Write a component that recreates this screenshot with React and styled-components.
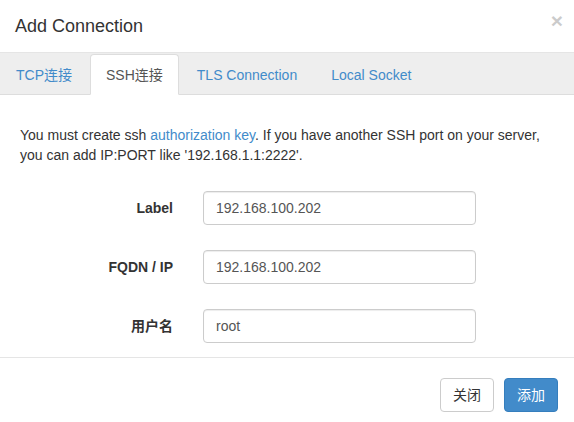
import React from 'react';
import styled, { createGlobalStyle } from 'styled-components';

const GlobalStyle = createGlobalStyle`
    html, body {
        margin: 0;
        padding: 0;
        background: #ffffff;
        overflow: hidden;
    }
    body {
        font-family: "Liberation Sans", Arial, "Noto Sans CJK SC", sans-serif;
        font-size: 14px;
        line-height: 20px;
        color: #333333;
    }
    * {
        box-sizing: border-box;
    }
`;

const tabs = ['TCP连接', 'SSH连接', 'TLS Connection', 'Local Socket'];

const fields = [
    { label: 'Label', value: '192.168.100.202' },
    { label: 'FQDN / IP', value: '192.168.100.202' },
    { label: '用户名', value: 'root' },
];

function App() {
    return (
        <>
            <GlobalStyle />
            <Modal>
                <Header>
                    <Title>Add Connection</Title>
                    <Close type="button">×</Close>
                </Header>
                <TabBar>
                    {tabs.map((tab, i) => (
                        <Tab key={tab} active={i === 1}>{tab}</Tab>
                    ))}
                </TabBar>
                <Body>
                    <Intro>
                        You must create ssh <Link href="#">authorization key</Link>. If you have another SSH port on your server,
                        you can add IP:PORT like '192.168.1.1:2222'.
                    </Intro>
                    <Form>
                        {fields.map((f) => (
                            <React.Fragment key={f.label}>
                                <FieldLabel>{f.label}</FieldLabel>
                                <Input defaultValue={f.value} />
                            </React.Fragment>
                        ))}
                    </Form>
                </Body>
                <Footer>
                    <Button>关闭</Button>
                    <Button primary>添加</Button>
                </Footer>
            </Modal>
        </>
    );
}

export default App;

const Modal = styled.div`
    width: 578px;
    background: #ffffff;
    display: flex;
    flex-direction: column;
`;

const Header = styled.div`
    display: flex;
    align-items: flex-start;
    justify-content: space-between;
    padding: 13px 15px 13px;
    border-bottom: 1px solid #e5e5e5;
`;

const Title = styled.h4`
    margin: 0;
    font-size: 18px;
    line-height: 26px;
    font-weight: 500;
    color: #333333;
`;

const Close = styled.button`
    margin-top: -3px;
    padding: 0;
    border: 0;
    background: transparent;
    font-family: "Liberation Sans", Arial, sans-serif;
    font-size: 21px;
    font-weight: bold;
    line-height: 1;
    color: #000000;
    opacity: 0.2;
    cursor: pointer;
`;

const TabBar = styled.ul`
    display: flex;
    margin: 0;
    padding: 1px 0 0;
    list-style: none;
    background: #eeeeee;
    border-bottom: 1px solid #dddddd;
`;

const Tab = styled.li`
    margin: 0 2px -1px 0;
    padding: 10px 15px 9px;
    line-height: 20px;
    border: 1px solid ${(p) => (p.active ? '#dddddd' : 'transparent')};
    border-bottom-color: ${(p) => (p.active ? '#ffffff' : 'transparent')};
    border-radius: 4px 4px 0 0;
    background: ${(p) => (p.active ? '#ffffff' : 'transparent')};
    color: ${(p) => (p.active ? '#555555' : '#428bca')};
    cursor: pointer;
`;

const Body = styled.div`
    padding: 30px 20px 0;
`;

const Intro = styled.p`
    margin: 0 0 26px;
`;

const Link = styled.a`
    color: #428bca;
    text-decoration: none;
`;

const Form = styled.div`
    display: grid;
    grid-template-columns: 153px 273px;
    column-gap: 30px;
    row-gap: 25px;
    align-items: center;
    margin-bottom: 14px;
`;

const FieldLabel = styled.label`
    text-align: right;
    font-weight: bold;
    color: #333333;
`;

const Input = styled.input`
    height: 34px;
    width: 100%;
    padding: 6px 12px;
    font-family: "Liberation Sans", Arial, sans-serif;
    font-size: 14px;
    line-height: 20px;
    color: #555555;
    background: #ffffff;
    border: 1px solid #cccccc;
    border-radius: 4px;
    box-shadow: inset 0 1px 1px rgba(0, 0, 0, 0.075);
    outline: none;
`;

const Footer = styled.div`
    display: flex;
    justify-content: flex-end;
    gap: 10px;
    padding: 20px 20px 20px;
    border-top: 1px solid #e5e5e5;
`;

const Button = styled.button`
    height: 34px;
    padding: 6px 12px;
    font-family: "Liberation Sans", Arial, "Noto Sans CJK SC", sans-serif;
    font-size: 14px;
    line-height: 20px;
    border-radius: 4px;
    border: 1px solid ${(p) => (p.primary ? '#357ebd' : '#cccccc')};
    background: ${(p) => (p.primary ? '#428bca' : '#ffffff')};
    color: ${(p) => (p.primary ? '#ffffff' : '#333333')};
    cursor: pointer;
`;
